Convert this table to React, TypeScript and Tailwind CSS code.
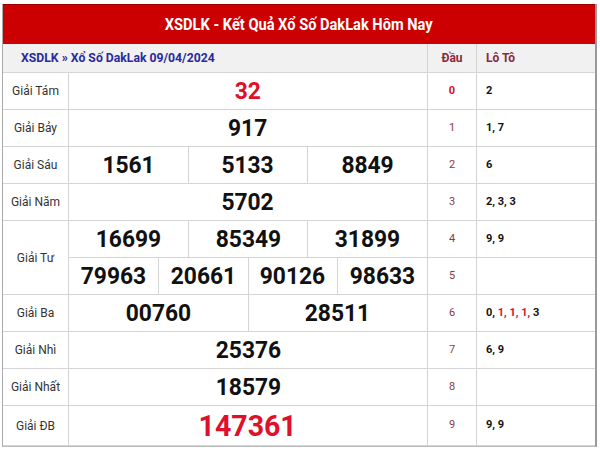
import React from "react";

const B = "border-[#d4d4d4]";

function Label({ text, h }: { text: string; h: string }) {
  return (
    <div className={`w-[66px] shrink-0 ${h} flex items-center justify-center border-r ${B} text-[12px] text-[#333]`}>
      {text}
    </div>
  );
}

function Nums({ items, red, big }: { items: string[]; red?: boolean; big?: boolean }) {
  return (
    <div className={`flex w-[359px] shrink-0 h-full border-r ${B}`}>
      {items.map((n, i) => (
        <div
          key={i}
          className={`flex-1 flex items-center justify-center font-bold ${i < items.length - 1 ? `border-r ${B}` : ""} ${
            red ? "text-[#e0102a]" : "text-[#111]"
          } ${big ? "text-[30px]" : "text-[24px]"}`}
        >
          <span className="inline-block scale-x-[0.95]">{n}</span>
        </div>
      ))}
    </div>
  );
}

function DL({ d, lo, dRed }: { d: string; lo: React.ReactNode; dRed?: boolean }) {
  return (
    <div className="flex flex-1 h-full">
      <div
        className={`w-[49px] shrink-0 flex items-center justify-center border-r ${B} text-[11px] ${
          dRed ? "text-[#d0102a] font-bold" : "text-[#8a3a4a]"
        }`}
      >
        {d}
      </div>
      <div className="flex-1 flex items-center pl-[9px] text-[11px] font-bold text-[#111]">{lo}</div>
    </div>
  );
}

function Row({
  label,
  items,
  d,
  lo,
  red,
  big,
  dRed,
  h = "h-[37px]",
}: {
  label: string;
  items: string[];
  d: string;
  lo: React.ReactNode;
  red?: boolean;
  big?: boolean;
  dRed?: boolean;
  h?: string;
}) {
  return (
    <div className={`flex ${h} border-b ${B}`}>
      <Label text={label} h="h-full" />
      <Nums items={items} red={red} big={big} />
      <DL d={d} lo={lo} dRed={dRed} />
    </div>
  );
}

export default function App() {
  return (
    <div className="w-[600px] h-[450px] bg-white pt-[4px] pl-[2px]" style={{ fontFamily: "Roboto, 'Noto Sans', sans-serif" }}>
      <div className="w-[595px] border-l border-r-2 border-b border-l-[#aaa] border-r-[#999] border-b-[#bbb]">
        <div className="h-[40px] bg-[#cc0000] border-t border-[#9a0000] flex items-center justify-center text-white font-bold text-[17px]">
          <span className="inline-block scale-x-[0.86] whitespace-nowrap">XSDLK - Kết Quả Xổ Số DakLak Hôm Nay</span>
        </div>
        <div className={`flex h-[29px] bg-[#f1f1f1] border-b ${B}`}>
          <div className={`w-[425px] shrink-0 flex items-center pl-[18px] border-r ${B} text-[13px] font-bold text-[#2a2a9c]`}>
            <span className="inline-block scale-x-[0.94] origin-left whitespace-nowrap">XSDLK » Xổ Số DakLak 09/04/2024</span>
          </div>
          <div className={`w-[49px] shrink-0 flex items-center justify-center border-r ${B} text-[12px] font-bold text-[#8a2a3a]`}>
            Đầu
          </div>
          <div className="flex-1 flex items-center pl-[9px] text-[12px] font-bold text-[#8a2a3a]">Lô Tô</div>
        </div>
        <Row label="Giải Tám" items={["32"]} red d="0" dRed lo="2" />
        <Row label="Giải Bảy" items={["917"]} d="1" lo="1, 7" />
        <Row label="Giải Sáu" items={["1561", "5133", "8849"]} d="2" lo="6" />
        <Row label="Giải Năm" items={["5702"]} d="3" lo="2, 3, 3" />
        <div className={`flex h-[74px] border-b ${B}`}>
          <Label text="Giải Tư" h="h-full" />
          <div className={`w-[359px] shrink-0 flex flex-col border-r ${B}`}>
            <div className={`h-[37px] border-b ${B} flex`}>
              {["16699", "85349", "31899"].map((n, i) => (
                <div key={n} className={`flex-1 flex items-center justify-center font-bold text-[24px] text-[#111] ${i < 2 ? `border-r ${B}` : ""}`}>
                  <span className="inline-block scale-x-[0.95]">{n}</span>
                </div>
              ))}
            </div>
            <div className="flex-1 flex">
              {["79963", "20661", "90126", "98633"].map((n, i) => (
                <div key={n} className={`flex-1 flex items-center justify-center font-bold text-[24px] text-[#111] ${i < 3 ? `border-r ${B}` : ""}`}>
                  <span className="inline-block scale-x-[0.95]">{n}</span>
                </div>
              ))}
            </div>
          </div>
          <div className="flex-1 flex flex-col">
            <div className={`h-[37px] border-b ${B}`}>
              <DL d="4" lo="9, 9" />
            </div>
            <div className="flex-1">
              <DL d="5" lo="" />
            </div>
          </div>
        </div>
        <Row
          label="Giải Ba"
          items={["00760", "28511"]}
          d="6"
          lo={
            <span>
              0, <span className="text-[#e0102a]">1, 1, 1,</span> 3
            </span>
          }
        />
        <Row label="Giải Nhì" items={["25376"]} d="7" lo="6, 9" />
        <Row label="Giải Nhất" items={["18579"]} d="8" lo="" />
        <Row label="Giải ĐB" items={["147361"]} red big d="9" lo="9, 9" h="h-[40px]" />
      </div>
    </div>
  );
}
